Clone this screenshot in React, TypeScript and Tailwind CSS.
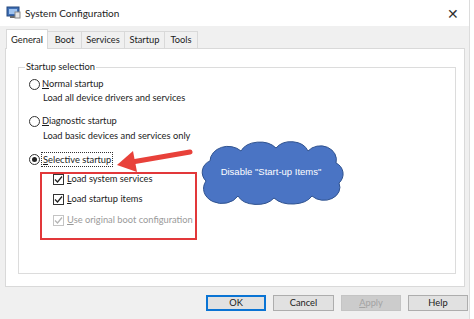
import React from "react";

const font = { fontFamily: 'Lato, "Noto Sans", sans-serif' };

function Radio({ checked = false }: { checked?: boolean }) {
  return (
    <span className="flex h-[11px] w-[11px] items-center justify-center rounded-full border border-[#333] bg-white">
      {checked && <span className="h-[5px] w-[5px] rounded-full bg-[#222]" />}
    </span>
  );
}

function Check({ disabled = false }: { disabled?: boolean }) {
  const c = disabled ? "#b5b5b5" : "#222";
  return (
    <span
      className={`flex h-[11px] w-[11px] items-center justify-center border bg-white ${
        disabled ? "border-[#c4c4c4]" : "border-[#333]"
      }`}
    >
      <svg width="9" height="9" viewBox="0 0 9 9">
        <path d="M1 4.5 L3.5 7 L8 1.5" fill="none" stroke={c} strokeWidth="1.3" />
      </svg>
    </span>
  );
}

function AppIcon() {
  return (
    <svg width="15" height="14" viewBox="0 0 15 14">
      <rect x="1" y="1" width="12" height="9" fill="#3f6fb5" stroke="#24487f" />
      <rect x="3" y="3" width="8" height="5" fill="#9fc3ef" />
      <rect x="4" y="10" width="6" height="2" fill="#6b6b6b" />
      <rect x="9" y="6" width="5" height="6" fill="#e6e6e6" stroke="#8a8a8a" />
    </svg>
  );
}

const tabs = [
  { label: "Boot", w: "w-[34px]" },
  { label: "Services", w: "w-[43px]" },
  { label: "Startup", w: "w-[40px]" },
  { label: "Tools", w: "w-[33px]" },
];

export default function App() {
  return (
    <div className="relative h-[319px] w-[474px] overflow-hidden bg-white text-[9.3px] text-[#1b1b1b]" style={font}>
      <div className="h-[319px] w-[470px] border-r border-[#dcdcdc] bg-[#f0f0f0]">
        {/* Title bar */}
        <div className="flex h-[26px] items-center bg-white pl-[6px] pr-[10px]">
          <AppIcon />
          <span className="ml-[4px] text-[10px] text-[#222]">System Configuration</span>
          <span className="ml-auto text-[14px] font-light text-[#333]">✕</span>
        </div>

        {/* Tabs */}
        <div className="flex h-[22px] items-end pl-[6px]">
          <div className="relative z-10 -mb-px flex h-[20px] w-[42px] items-center justify-center border border-b-0 border-[#d9d9d9] bg-white">
            General
          </div>
          {tabs.map((t) => (
            <div
              key={t.label}
              className={`flex h-[17px] ${t.w} items-center justify-center border border-l-0 border-b-0 border-[#d9d9d9] bg-[#f0f0f0]`}
            >
              {t.label}
            </div>
          ))}
        </div>

        {/* Panel */}
        <div className="ml-[5px] h-[239px] w-[460px] border border-[#d9d9d9] bg-white pl-[12px] pr-[8px] pt-[18px]">
          <div className="relative h-[207px] w-[438px] border border-[#dcdcdc]">
            <span className="absolute -top-[8px] left-[6px] bg-white px-[1px]">Startup selection</span>
            <div className="flex flex-col pl-[10px] pt-[8px]">
              <div className="flex h-[16px] items-center gap-[2px]">
                <Radio />
                <span><u>N</u>ormal startup</span>
              </div>
              <div className="-mt-[2px] flex h-[16px] items-center pl-[14px]">Load all device drivers and services</div>
              <div className="mt-[7px] flex h-[16px] items-center gap-[2px]">
                <Radio />
                <span><u>D</u>iagnostic startup</span>
              </div>
              <div className="-mt-px flex h-[16px] items-center pl-[14px]">Load basic devices and services only</div>
              <div className="mt-[7px] flex h-[16px] items-center gap-[1px]">
                <Radio checked />
                <span className="border border-dotted border-[#333] px-[1px] leading-[13px]"><u>S</u>elective startup</span>
              </div>
              <div className="mt-[4px] flex h-[16px] items-center gap-[3px] pl-[24px]">
                <Check />
                <span><u>L</u>oad system services</span>
              </div>
              <div className="mt-[4px] flex h-[16px] items-center gap-[3px] pl-[24px]">
                <Check />
                <span><u>L</u>oad startup items</span>
              </div>
              <div className="mt-[5px] flex h-[16px] items-center gap-[3px] pl-[24px] text-[#9a9a9a]">
                <Check disabled />
                <span><u>U</u>se original boot configuration</span>
              </div>
            </div>
          </div>
        </div>

        {/* Buttons */}
        <div className="mt-[8px] flex gap-[7px] pl-[206px]">
          <div className="flex h-[16px] w-[60px] items-center justify-center border-2 border-[#0a74d4] bg-[#e1e1e1]">OK</div>
          <div className="flex h-[16px] w-[61px] items-center justify-center border border-[#adadad] bg-[#e1e1e1]">Cancel</div>
          <div className="flex h-[16px] w-[60px] items-center justify-center border border-[#c4c4c4] bg-[#cccccc] text-[#a3a3a3]"><span><u>A</u>pply</span></div>
          <div className="flex h-[16px] w-[60px] items-center justify-center border border-[#adadad] bg-[#e1e1e1]">Help</div>
        </div>
      </div>

      {/* Annotation: red box */}
      <div className="absolute left-[40px] top-[172px] h-[68px] w-[157px] border-2 border-[#e2383a]" />

      {/* Annotation: arrow and cloud */}
      <svg className="pointer-events-none absolute left-0 top-0" width="474" height="319" viewBox="0 0 474 319">
        <line x1="190" y1="152" x2="132" y2="162" stroke="#e8413a" strokeWidth="5" strokeLinecap="round" />
        <polygon points="117,165 133,151 137,172" fill="#e8413a" />
        <g transform="translate(196 143)">
          <path
            d="M10 38 A12 12 0 0 1 14 18 A18 15 0 0 1 45 8 A20 14 0 0 1 80 5 A18 14 0 0 1 112 8 A16 14 0 0 1 140 20 A12 12 0 0 1 143 40 A16 13 0 0 1 116 53 A22 14 0 0 1 78 55 A20 13 0 0 1 42 53 A16 13 0 0 1 10 38 Z"
            fill="#4a74c4"
            stroke="#2f528f"
            strokeWidth="1"
          />
        </g>
      </svg>
      <div className="absolute left-[198px] top-[165px] flex w-[146px] justify-center text-[9.5px] text-white" style={{ fontFamily: '"Liberation Sans", Arial, sans-serif' }}>
        Disable "Start-up Items"
      </div>
    </div>
  );
}
